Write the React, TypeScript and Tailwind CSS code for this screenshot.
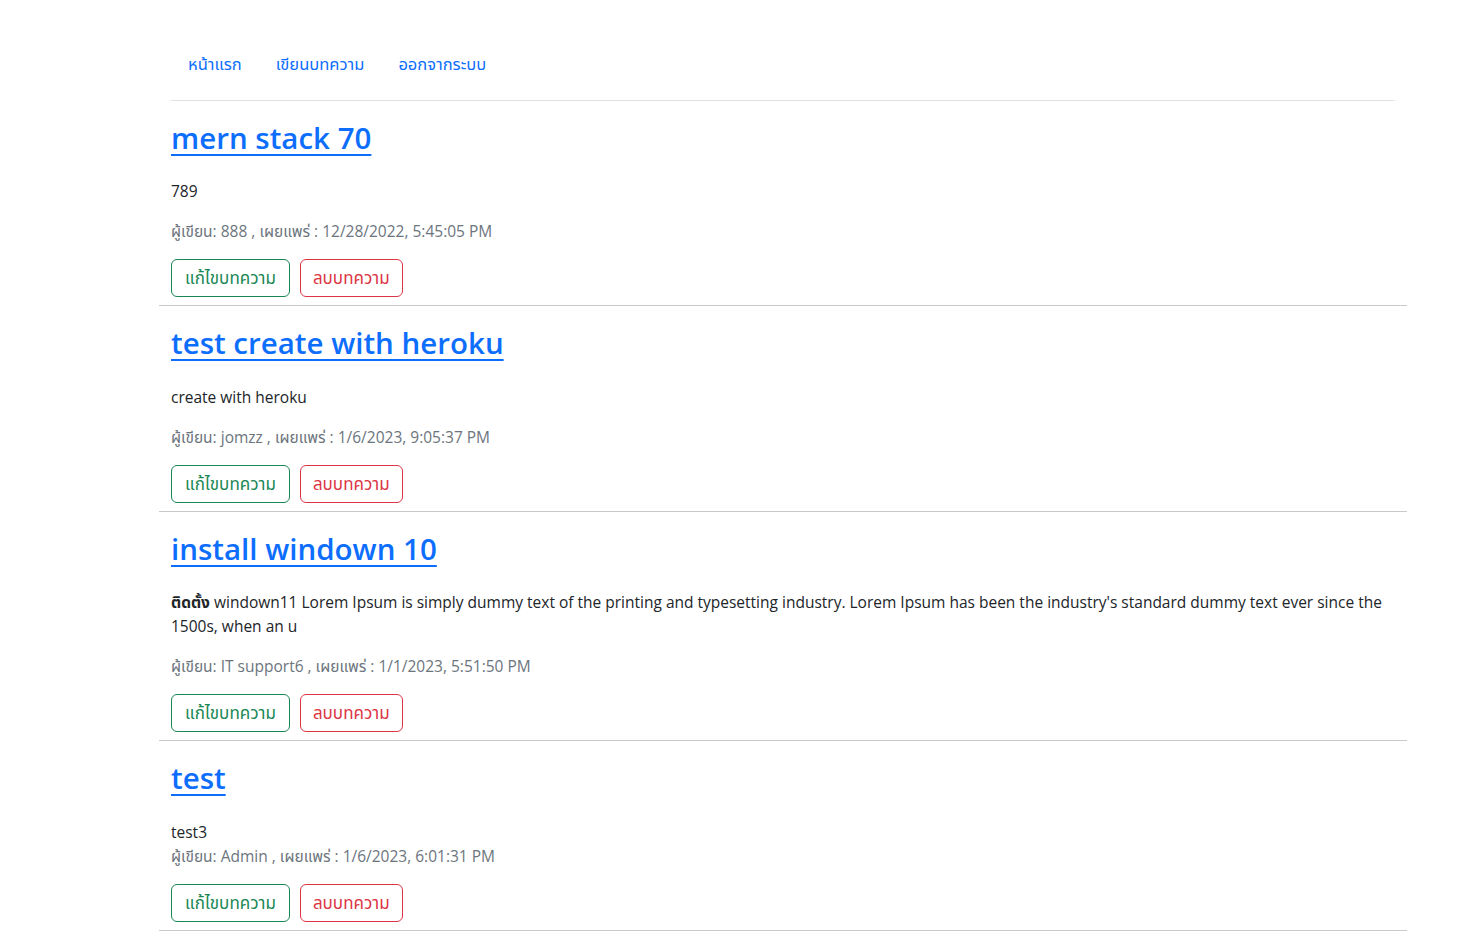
const posts = [
  {
    title: "mern stack 70",
    content: <p className="mb-4">789</p>,
    author: "888",
    date: "12/28/2022, 5:45:05 PM",
  },
  {
    title: "test create with heroku",
    content: <p className="mb-4">create with heroku</p>,
    author: "jomzz",
    date: "1/6/2023, 9:05:37 PM",
  },
  {
    title: "install windown 10",
    content: (
      <p className="mb-4">
        <strong className="font-bold">ติดตั้ง</strong> windown11 Lorem Ipsum is simply dummy
        text of the printing and typesetting industry. Lorem Ipsum has been the industry's
        standard dummy text ever since the 1500s, when an u
      </p>
    ),
    author: "IT support6",
    date: "1/1/2023, 5:51:50 PM",
  },
  {
    title: "test",
    content: <div>test3</div>,
    author: "Admin",
    date: "1/6/2023, 6:01:31 PM",
  },
];

const NavBar = () => {
  return (
    <ul className="mx-3 flex border-b border-[#dee2e6] pb-4">
      {["หน้าแรก", "เขียนบทความ", "ออกจากระบบ"].map((item) => (
        <li key={item}>
          <a href="#" className="block px-[17px] py-2 text-[16.5px] text-[#0d6efd]">
            {item}
          </a>
        </li>
      ))}
    </ul>
  );
};

const PostItem = ({ post }: { post: (typeof posts)[number] }) => {
  return (
    <div>
      <div className="px-3 pt-[18px]">
        <h2 className="mb-[22px] text-[29.5px] font-semibold leading-[38.4px]">
          <a href="#" className="text-[#0d6efd] underline decoration-2 underline-offset-[5px]">
            {post.title}
          </a>
        </h2>
        <div>{post.content}</div>
        <p className="mb-4 text-[#6c757d]">
          ผู้เขียน: {post.author} , เผยแพร่ : {post.date}
        </p>
        <div className="flex gap-[10px]">
          <button className="rounded-md border border-[#198754] px-[13px] py-[6px] text-[17px] leading-6 text-[#198754]">
            แก้ไขบทความ
          </button>
          <button className="rounded-md border border-[#dc3545] px-3 py-[6px] text-[17px] leading-6 text-[#dc3545]">
            ลบบทความ
          </button>
        </div>
      </div>
      <hr className="mt-2 border-t border-[#c8c9ca]" />
    </div>
  );
};

export default function App() {
  return (
    <div
      className="min-h-screen bg-white text-[15.5px] leading-6 text-[#212529]"
      style={{ fontFamily: '"Open Sans", "Noto Sans", "Noto Sans Thai", "DejaVu Sans", sans-serif' }}
    >
      <div className="ml-[159px] w-[1248px] pt-[44px]">
        <NavBar />
        {posts.map((post) => (
          <PostItem key={post.title} post={post} />
        ))}
      </div>
    </div>
  );
}
